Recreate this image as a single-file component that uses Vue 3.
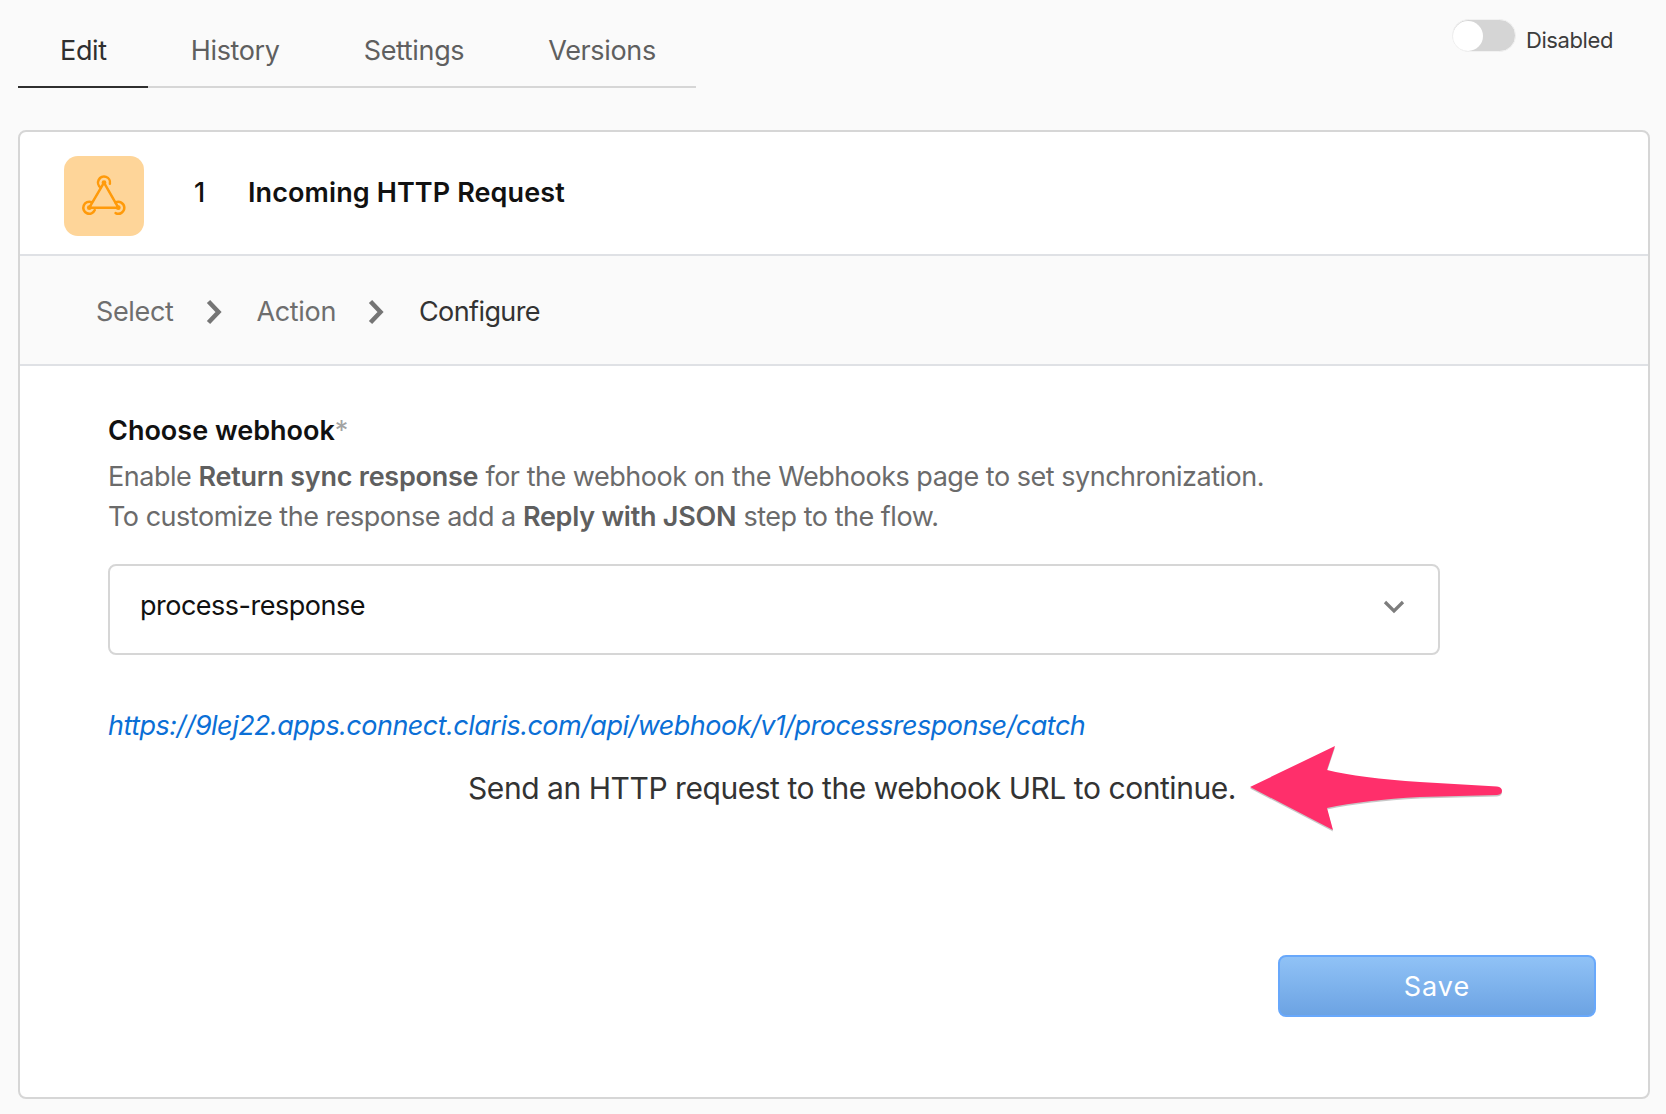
<script setup>
const tabs = ['Edit', 'History', 'Settings', 'Versions']
</script>

<template>
  <div class="page">
    <header class="top">
      <nav class="tabs">
        <a v-for="(tab, i) in tabs" :key="tab" :class="['tab', { 'tab--active': i === 0 }]">{{ tab }}</a>
      </nav>
      <div class="toggle">
        <span class="toggle-track"><span class="toggle-knob"></span></span>
        <span class="toggle-label">Disabled</span>
      </div>
    </header>

    <section class="card">
      <div class="card-head">
        <div class="step-icon">
          <svg viewBox="0 0 80 80" width="80" height="80" fill="none" stroke="#ff9a0a" stroke-width="2.5" stroke-linecap="round" stroke-linejoin="round">
            <path d="M40 26.7 L25.3 51.7 H54.3 L40 26.7" />
            <path d="M36.6 31.5 A6 6 0 1 1 45.9 27.8" />
            <path d="M27.6 46.2 A6 6 0 1 0 30.8 54.1" />
            <path d="M51.4 46.5 A6 6 0 1 1 51.6 57.1" />
            <g fill="#ff9a0a" stroke="none">
              <circle cx="40" cy="26.7" r="2.4" />
              <circle cx="25.3" cy="51.7" r="2.4" />
              <circle cx="54.3" cy="51.7" r="2.4" />
            </g>
          </svg>
        </div>
        <span class="step-num">1</span>
        <h1 class="step-title">Incoming HTTP Request</h1>
      </div>

      <div class="crumbs">
        <span class="crumb">Select</span>
        <svg class="crumb-sep" viewBox="0 0 16 26" fill="none"><path d="M2.5 2.5l10 10.5-10 10.5" stroke="#757575" stroke-width="4.5" /></svg>
        <span class="crumb">Action</span>
        <svg class="crumb-sep" viewBox="0 0 16 26" fill="none"><path d="M2.5 2.5l10 10.5-10 10.5" stroke="#757575" stroke-width="4.5" /></svg>
        <span class="crumb crumb--active">Configure</span>
      </div>

      <div class="form">
        <label class="field-label">Choose webhook<span class="req">*</span></label>
        <p class="hint">
          Enable <b>Return sync response</b> for the webhook on the Webhooks page to set synchronization.<br />
          To customize the response add a <b>Reply with JSON</b> step to the flow.
        </p>
        <div class="select">
          <span>process-response</span>
          <svg class="select-caret" viewBox="0 0 22 14" fill="none"><path d="M2 2l9 9 9-9" stroke="#7d7d7d" stroke-width="3.2" /></svg>
        </div>
        <a class="url">https://9lej22.apps.connect.claris.com/api/webhook/v1/processresponse/catch</a>
        <p class="notice">Send an HTTP request to the webhook URL to continue.</p>
        <div class="actions">
          <button class="save">Save</button>
        </div>
      </div>

      <svg class="arrow" viewBox="0 0 256 90" width="256" height="90">
        <path d="M0 43 L85 2 Q80 17 77 26 Q110 34 170 38 L247 42.6 Q252 43.5 252 47 Q252 50.5 247 51 L170 53 Q115 56 77 64 Q80 75 83 86 Z" fill="#000" opacity=".22" transform="translate(0 1.5)" />
        <path d="M0 43 L85 2 Q80 17 77 26 Q110 34 170 38 L247 42.6 Q252 43.5 252 47 Q252 50.5 247 51 L170 53 Q115 56 77 64 Q80 75 83 86 Z" fill="#ff2f6b" />
      </svg>
    </section>
  </div>
</template>

<style scoped>
.page {
  min-height: 1114px;
  box-sizing: border-box;
  padding: 0 16px 15px 18px;
  background: #fafafa;
  font-family: Inter, "Liberation Sans", sans-serif;
  color: #333;
}

.top {
  display: flex;
  justify-content: space-between;
  align-items: flex-start;
  height: 130px;
}

.tabs {
  display: flex;
  width: 678px;
  height: 88px;
  box-sizing: border-box;
  border-bottom: 2px solid #d6d6d6;
  padding-top: 31px;
}

.tab {
  height: 57px;
  box-sizing: border-box;
  margin-bottom: -2px;
  padding: 0 42px;
  font-size: 27px;
  line-height: 40px;
  letter-spacing: -0.35px;
  color: #5f5f5f;
}

.tab--active {
  padding-right: 41px;
  margin-right: 1px;
  color: #2f2f2f;
  border-bottom: 2px solid #2f2f2f;
}

.toggle {
  display: flex;
  align-items: flex-start;
  gap: 10px;
  margin: 19px 37px 0 0;
}

.toggle-track {
  display: block;
  width: 64px;
  height: 33px;
  box-sizing: border-box;
  border-radius: 17px;
  background: #d5d5d5;
  border: 1px solid #f1f1f1;
}

.toggle-knob {
  display: block;
  width: 30px;
  height: 30px;
  margin-top: 0.5px;
  border-radius: 50%;
  background: #fff;
}

.toggle-label {
  margin-top: 7px;
  font-size: 22px;
  line-height: 28px;
  letter-spacing: -0.4px;
  color: #3c3c3c;
}

.card {
  position: relative;
  height: 969px;
  box-sizing: border-box;
  border: 2px solid #d6d6d6;
  border-radius: 8px;
  background: #fff;
}

.card-head {
  display: flex;
  align-items: center;
  height: 124px;
  box-sizing: border-box;
  padding: 24px 0 18px 44px;
  border-bottom: 2px solid #dfe1e5;
}

.step-icon {
  display: flex;
  flex-shrink: 0;
  width: 80px;
  height: 80px;
  border-radius: 14px;
  background: #fed599;
}

.step-num {
  width: 24px;
  margin: 0 0 7px 50px;
  font-size: 27px;
  font-weight: 500;
  color: #111;
}

.step-title {
  margin: 0 0 7px 30px;
  font-size: 27px;
  font-weight: 600;
  letter-spacing: 0.1px;
  color: #111;
}

.crumbs {
  display: flex;
  align-items: center;
  height: 110px;
  box-sizing: border-box;
  padding: 3px 0 0 76px;
  background: #fafafa;
  border-bottom: 2px solid #dfe1e5;
}

.crumb {
  font-size: 27px;
  letter-spacing: -0.35px;
  color: #6e6e6e;
}

.crumb--active {
  letter-spacing: -0.6px;
  color: #333;
}

.crumb-sep {
  width: 16px;
  height: 26px;
  margin: 0 35px 0 32px;
}

.form {
  padding: 48px 52px 0 88px;
}

.field-label {
  display: block;
  font-size: 27px;
  line-height: 34px;
  font-weight: 600;
  color: #111;
}

.req {
  color: #a3a3a3;
  font-weight: 400;
}

.hint {
  margin: 9px 0 0;
  font-size: 27px;
  line-height: 40px;
  letter-spacing: -0.48px;
  color: #6b6b6b;
}

.hint b {
  font-weight: 600;
  letter-spacing: -0.25px;
  color: #5f5f5f;
}

.select {
  display: flex;
  align-items: center;
  justify-content: space-between;
  width: 1332px;
  height: 91px;
  box-sizing: border-box;
  margin-top: 27px;
  padding: 0 33px 8px 30px;
  border: 2px solid #d6d6d6;
  border-radius: 8px;
  font-size: 27px;
  letter-spacing: -0.5px;
  color: #111;
}

.select-caret {
  width: 22px;
  height: 14px;
  margin-top: 2px;
}

.url {
  display: block;
  margin-top: 53px;
  font-size: 27px;
  line-height: 36px;
  letter-spacing: -0.52px;
  font-style: italic;
  color: #0b6fd6;
}

.notice {
  margin: 24px 0 0;
  text-align: center;
  font-size: 30px;
  line-height: 40px;
  letter-spacing: -0.45px;
  color: #333;
}

.actions {
  display: flex;
  justify-content: flex-end;
  margin-top: 147px;
}

.save {
  width: 318px;
  height: 62px;
  border: 2px solid #68a8fb;
  border-radius: 8px;
  background: linear-gradient(#90c2f6, #6ca3e3);
  font-family: inherit;
  font-size: 27px;
  letter-spacing: 1px;
  color: #fff;
}

.arrow {
  position: absolute;
  left: 1230px;
  top: 612px;
}
</style>

<style>
html, body { background: #fafafa; }
</style>
